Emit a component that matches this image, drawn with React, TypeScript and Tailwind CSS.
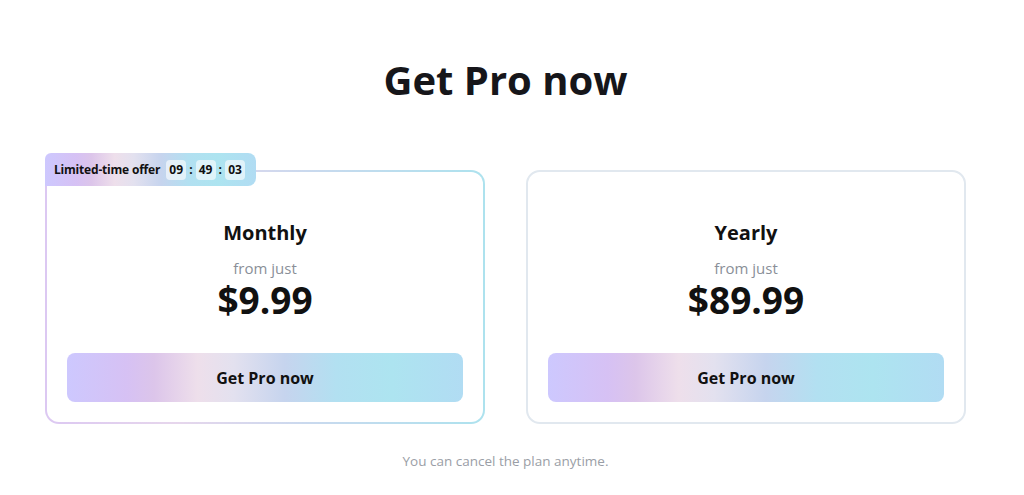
import React from 'react';

const gradient =
  'bg-[linear-gradient(90deg,#cdc8fe_0%,#d6c1f4_15%,#dcc5ea_22%,#eedfeb_33%,#e3e1ef_42%,#c6d4ee_55%,#b2e0f1_68%,#ade4f0_82%,#b1dcf3_100%)]';

function Timer({ parts }: { parts: string[] }) {
  return (
    <div className="flex items-center gap-[2px]">
      {parts.map((p, i) => (
        <React.Fragment key={i}>
          {i > 0 && <span className="px-[1px] text-[12px] font-bold text-[#111]">:</span>}
          <span className="flex h-[20px] w-[20px] items-center justify-center rounded-[4px] bg-white/60 text-[12px] font-bold text-[#111]">
            {p}
          </span>
        </React.Fragment>
      ))}
    </div>
  );
}

function PlanBody({ name, price }: { name: string; price: string }) {
  return (
    <div className="flex flex-col items-center px-[20px] pb-[20px] pt-[48px]">
      <div className="text-[20px] font-bold leading-[26px] text-[#111]">{name}</div>
      <div className="mt-[12px] text-[15px] leading-[20px] text-[#8a8f98]">from just</div>
      <div className="mt-[2px] text-[37px] font-bold leading-[40px] text-[#111]">{price}</div>
      <button
        className={`mt-[33px] flex h-[49px] w-full items-center justify-center rounded-[8px] ${gradient} text-[16px] font-bold text-[#111]`}
      >
        Get Pro now
      </button>
    </div>
  );
}

export default function App() {
  return (
    <div
      className="min-h-[495px] bg-white pr-[13px]"
      style={{ fontFamily: '"Open Sans", "Noto Sans", sans-serif' }}
    >
      <h1 className="pt-[54px] text-center text-[40px] font-bold leading-[52px] text-[#16161a]">Get Pro now</h1>
      <div className="mx-auto mt-[64px] grid w-[921px] grid-cols-2 gap-[41px]">
        <div className="relative">
          <div className="rounded-[14px] bg-[linear-gradient(90deg,#dcc8f2_0%,#e6d6ec_30%,#c9d9ee_60%,#ade2ee_100%)] p-[2px]">
            <div className="rounded-[12px] bg-white">
              <PlanBody name="Monthly" price="$9.99" />
            </div>
          </div>
          <div
            className={`absolute left-0 top-[-17px] flex h-[33px] w-[211px] items-center gap-[6px] rounded-tl-[6px] rounded-tr-[8px] rounded-br-[8px] ${gradient} pl-[9px]`}
          >
            <span className="text-[12px] font-bold tracking-[-0.2px] text-[#111]">Limited-time offer</span>
            <Timer parts={['09', '49', '03']} />
          </div>
        </div>
        <div className="rounded-[14px] border-2 border-[#e1e8ef] bg-white">
          <PlanBody name="Yearly" price="$89.99" />
        </div>
      </div>
      <p className="mt-[27px] text-center text-[13.5px] text-[#9a9ea6]">You can cancel the plan anytime.</p>
    </div>
  );
}
